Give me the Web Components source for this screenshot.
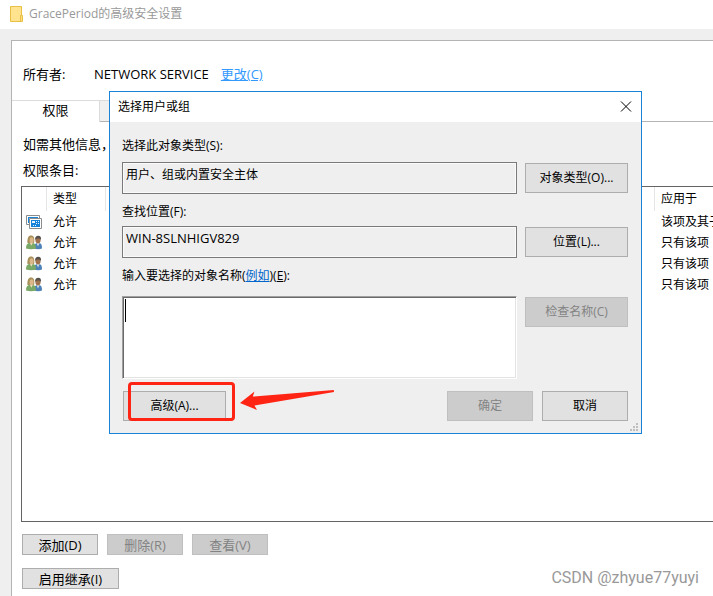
<!DOCTYPE html>
<html lang="zh-CN">
<head>
<meta charset="utf-8">
<meta name="viewport" content="width=device-width, initial-scale=1">
<title>GracePeriod的高级安全设置</title>
<style>
  html, body {
    margin: 0;
    height: 100%;
    overflow: hidden;
  }
  body {
    position: relative;
    background: #efefef;
    color: #000;
    font: 12px/16px "Open Sans", "Noto Sans CJK SC", sans-serif;
  }
  security-window {
    height: 100%;
  }
  user-picker {
    position: absolute;
    top: 91px;
    left: 109px;
  }
  water-mark {
    position: absolute;
    right: 14px;
    bottom: 8px;
  }
</style>
</head>
<body>
<security-window caption="GracePeriod的高级安全设置">
  <owner-row slot="owner" label="所有者:" owner="NETWORK SERVICE"></owner-row>
  <tab-strip slot="tabs"></tab-strip>
  <permission-table slot="list"></permission-table>
  <win-button slot="actions">添加(D)</win-button>
  <win-button slot="actions" disabled>删除(R)</win-button>
  <win-button slot="actions" disabled>查看(V)</win-button>
  <win-button slot="inherit">启用继承(I)</win-button>
</security-window>
<user-picker></user-picker>
<water-mark>CSDN @zhyue77yuyi</water-mark>

<script>
class WinButton extends HTMLElement {

  constructor() {
    super();
    this.shadowDOM = this.attachShadow({mode: 'open'});
  }

  connectedCallback() {
    this.shadowDOM.innerHTML = `
      <style>
        :host {
          display: block;
          height: var(--button-height, 30px);
        }
        button {
          display: flex;
          align-items: center;
          justify-content: center;
          box-sizing: border-box;
          width: 100%;
          height: 100%;
          padding: 0;
          border: 1px solid #adadad;
          border-radius: 0;
          background: #e1e1e1;
          color: #000;
          font: inherit;
          line-height: 16px;
          white-space: nowrap;
        }
        button:disabled {
          border-color: #bfbfbf;
          background: #ccc;
          color: #838383;
        }
      </style>
      <button type="button" ${this.hasAttribute('disabled') ? 'disabled' : ''}><slot></slot></button>
    `;
  }
}

class OwnerRow extends HTMLElement {

  constructor() {
    super();
    this.shadowDOM = this.attachShadow({mode: 'open'});
  }

  connectedCallback() {
    this.shadowDOM.innerHTML = `
      <style>
        :host {
          display: flex;
          gap: 12px;
        }
        .label {
          width: 59px;
        }
        a {
          color: #3399ff;
        }
      </style>
      <span class="label">${this.getAttribute('label')}</span>
      <span>${this.getAttribute('owner')}</span>
      <a href="#">更改(C)</a>
    `;
  }
}

class TabStrip extends HTMLElement {

  constructor() {
    super();
    this.shadowDOM = this.attachShadow({mode: 'open'});
    this.shadowDOM.innerHTML = `
      <style>
        :host {
          display: flex;
          height: 22px;
        }
        button {
          box-sizing: border-box;
          width: 88px;
          padding: 0 0 4px;
          border: 1px solid #dcdcdc;
          border-width: 1px 1px 0 0;
          background: #fff;
          font: inherit;
          line-height: 16px;
        }
        .back {
          width: 70px;
          border-bottom: 1px solid #b4b4b4;
          background: #f0f0f0;
        }
        .rest {
          flex: 1;
          border-bottom: 1px solid #b4b4b4;
        }
      </style>
      <button type="button">权限</button>
      <button type="button" class="back" aria-label="审核"></button>
      <div class="rest"></div>
    `;
  }
}

const ENTRIES = [
  {icon: 'console', type: '允许', scope: '该项及其子'},
  {icon: 'people', type: '允许', scope: '只有该项'},
  {icon: 'people', type: '允许', scope: '只有该项'},
  {icon: 'people', type: '允许', scope: '只有该项'}
];

const ICONS = {
  console: `
    <svg width="16" height="16" viewBox="0 0 16 16">
      <path d="M.5 1.500h13v9H.5z" fill="#fff" stroke="#8c8c8c"/>
      <path d="M2 3h10v6H2z" fill="#1683d8"/>
      <path d="M3 4h1v1H3zM5 4h6v1H5z" fill="#fff"/>
      <path d="M3.500 4.500h12v10h-12z" fill="#fff" stroke="#8c8c8c"/>
      <path d="M5 6h9v7H5z" fill="#1683d8"/>
      <path d="M6 7h3v2H6zM10 7h1v1h-1zM12 7h1v1h-1zM10 9h1v1h-1zM12 9h1v1h-1zM7 11h1v1H7zM9 11h1v1H9z" fill="#e8f4fd"/>
    </svg>`,
  people: `
    <svg width="16" height="16" viewBox="0 0 16 16">
      <path d="M8 13.500C8 10 9 8.500 11 8h2c2.500.3 3 2 3 5.500-2 .9-5.500.9-8 0z" fill="#4d82b8"/>
      <path d="M10.500 8l1.500 3.500L13.500 8z" fill="#d8e5ee"/>
      <ellipse cx="12" cy="5" rx="2.600" ry="3.400" fill="#a0714d"/>
      <path d="M9.200 5C8.800 2 10.300.8 12.300.8s3.200 1.500 2.600 4.200c-1-1.800-3.700-2.200-5.700 0z" fill="#55504a"/>
      <path d="M1.300 7.500C1.500 3 2.300.6 5 .6c3 0 3.500 2.400 3.300 6.600-1 1.800-5.500 2-7 .3z" fill="#a68f58"/>
      <path d="M0 13.500C0 10 1 8.300 3.500 8H7c2 .3 3 2 3 5.500-3 .9-7 .9-10 0z" fill="#7aa866"/>
      <path d="M3.800 7.500l1.500 3.200L7 7.500z" fill="#f0d9b9"/>
      <ellipse cx="5.600" cy="5.200" rx="2" ry="2.900" fill="#dcb789"/>
    </svg>`
};

class PermissionTable extends HTMLElement {

  constructor() {
    super();
    this.shadowDOM = this.attachShadow({mode: 'open'});
    this.render();
  }

  render() {
    this.shadowDOM.innerHTML = `
      <style>
        :host {
          display: block;
          height: 100%;
          box-sizing: border-box;
          border: 1px solid #646464;
          border-right: 0;
          overflow: hidden;
          font-size: 12px;
          line-height: 16px;
        }
        table {
          width: 100%;
          table-layout: fixed;
          border-collapse: separate;
          border-spacing: 0;
        }
        .icon { width: 25px; }
        .type { width: 59px; }
        .scope { width: 58px; }
        th, td {
          box-sizing: border-box;
          height: 21px;
          padding: 0 0 0 6px;
          overflow: hidden;
          text-align: left;
          font-weight: normal;
          white-space: nowrap;
        }
        th {
          height: 24px;
          border-right: 1px solid #e5e5e5;
        }
        th:last-child {
          border-right: 0;
        }
        td:first-child {
          padding-left: 4px;
        }
        svg {
          display: block;
        }
      </style>
      <table>
        <colgroup><col class="icon"><col class="type"><col><col class="scope"></colgroup>
        <thead>
          <tr><th></th><th>类型</th><th></th><th>应用于</th></tr>
        </thead>
        <tbody>
          ${ENTRIES.map(entry => `
            <tr><td>${ICONS[entry.icon]}</td><td>${entry.type}</td><td></td><td>${entry.scope}</td></tr>
          `).join('')}
        </tbody>
      </table>
    `;
  }
}

class SecurityWindow extends HTMLElement {

  constructor() {
    super();
    this.shadowDOM = this.attachShadow({mode: 'open'});
  }

  connectedCallback() {
    this.shadowDOM.innerHTML = `
      <style>
        :host {
          display: flex;
          flex-direction: column;
          font-size: 13px;
          line-height: 20px;
        }
        header {
          display: flex;
          align-items: center;
          gap: 6px;
          height: 29px;
          padding: 0 0 2px 10px;
          box-sizing: border-box;
          background: #fff;
          color: #999;
          font-size: 12px;
        }
        main {
          flex: 1;
          display: flex;
          flex-direction: column;
          min-height: 0;
          box-sizing: border-box;
          margin: 11px 0 0 11px;
          padding: 23px 0 7px;
          border: 1px solid #b4b4b4;
          border-width: 1px 0 0 1px;
          background: #fff;
        }
        .owner {
          padding: 0 11px 16px;
        }
        p {
          margin: 0;
          padding: 0 11px 6px;
        }
        .tabs {
          padding-bottom: 12px;
        }
        .entries {
          padding-bottom: 6px;
        }
        .list {
          flex: 1;
          min-height: 0;
          margin-left: 9px;
        }
        .buttons {
          display: grid;
          grid-template-columns: repeat(3, 76px);
          gap: 9px;
          padding: 12px 0 0 10px;
          --button-height: 21px;
        }
        .buttons.inherit {
          grid-template-columns: 97px;
          padding-top: 13px;
        }
      </style>
      <header>
        <svg width="13" height="16" viewBox="0 0 13 16">
          <path d="M.5.5h11v15H.5z" fill="#ffe38f" stroke="#e9bf45"/>
          <path d="M10.500 9.500h2v6h-2z" fill="#ffdf80" stroke="#e9bf45"/>
        </svg>
        <span>${this.getAttribute('caption')}</span>
      </header>
      <main>
        <div class="owner"><slot name="owner"></slot></div>
        <div class="tabs"><slot name="tabs"></slot></div>
        <p>如需其他信息，</p>
        <p class="entries">权限条目:</p>
        <div class="list"><slot name="list"></slot></div>
        <div class="buttons"><slot name="actions"></slot></div>
        <div class="buttons inherit"><slot name="inherit"></slot></div>
      </main>
    `;
  }
}

class UserPicker extends HTMLElement {

  constructor() {
    super();
    this.shadowDOM = this.attachShadow({mode: 'open'});
    this.shadowDOM.innerHTML = `
      <style>
        :host {
          display: block;
          box-sizing: border-box;
          width: 533px;
          border: 1px solid #1883d7;
          background: #efefef;
        }
        header {
          display: flex;
          align-items: center;
          justify-content: space-between;
          height: 30px;
          padding: 0 9px 0 8px;
          background: #fff;
        }
        .close {
          width: 12px;
          height: 12px;
          padding: 0;
          border: 0;
          background: none;
        }
        svg {
          display: block;
        }
        form {
          display: grid;
          grid-template-columns: 1fr 103px;
          column-gap: 8px;
          padding: 16px 13px 12px 12px;
        }
        label {
          grid-column: 1 / -1;
          padding-bottom: 8px;
        }
        .place {
          padding: 10px 0 6px;
        }
        .names {
          padding: 10px 0 12px;
        }
        a {
          color: #0066cc;
        }
        input, textarea {
          display: block;
          box-sizing: border-box;
          width: 100%;
          margin: 0;
          border-radius: 0;
          outline: 0;
          color: #000;
          font: inherit;
        }
        input {
          height: 32px;
          padding: 0 3px 8px;
          border: 1px solid #7a7a7a;
          background: #efefef;
          box-shadow: inset 0 0 0 1px #fafafa;
        }
        #place {
          font-size: 13px;
        }
        .box {
          position: relative;
        }
        textarea {
          height: 83px;
          padding: 2px;
          border: 1px solid;
          border-color: #a0a0a0 #fff #fff #a0a0a0;
          background: #fff;
          box-shadow: inset 1px 1px #696969, inset -1px -1px #e3e3e3;
          resize: none;
        }
        .caret {
          position: absolute;
          top: 3px;
          left: 3px;
          width: 1px;
          height: 23px;
          background: #000;
        }
        win-button {
          align-self: center;
        }
        .check {
          align-self: start;
          margin-top: 1px;
        }
        .actions {
          grid-column: 1 / -1;
          display: grid;
          grid-template-columns: 103px 1fr 86px 86px;
          column-gap: 9px;
          padding: 12px 0 0 1px;
        }
        .ok {
          grid-column: 3;
        }
        .grip {
          position: absolute;
          right: 3px;
          bottom: 2px;
        }
        .marks {
          position: absolute;
          left: 18px;
          bottom: 12px;
        }
      </style>
      <header>
        <span>选择用户或组</span>
        <button type="button" class="close" aria-label="关闭">
          <svg width="12" height="12" viewBox="0 0 12 12"><path d="M1 .5l10 10M11 .5l-10 10" stroke="#000"/></svg>
        </button>
      </header>
      <form>
        <label for="kind">选择此对象类型(S):</label>
        <input id="kind" type="text" value="用户、组或内置安全主体" readonly>
        <win-button>对象类型(O)...</win-button>

        <label for="place" class="place">查找位置(F):</label>
        <input id="place" type="text" value="WIN-8SLNHIGV829" readonly>
        <win-button>位置(L)...</win-button>

        <label for="names" class="names">输入要选择的对象名称(<a href="#">例如</a>)(<u>E</u>):</label>
        <div class="box">
          <textarea id="names"></textarea>
          <span class="caret"></span>
        </div>
        <win-button class="check" disabled>检查名称(C)</win-button>

        <div class="actions">
          <win-button>高级(A)...</win-button>
          <win-button class="ok" disabled>确定</win-button>
          <win-button>取消</win-button>
        </div>
      </form>
      <!-- resize grip -->
      <svg class="grip" width="8" height="8" viewBox="0 0 8 8">
        <path d="M6 0h2v2H6zM3 3h2v2H3zM6 3h2v2H6zM0 6h2v2H0zM3 6h2v2H3zM6 6h2v2H6z" fill="#bfbfbf"/>
      </svg>
      <!-- red frame and arrow over the advanced button -->
      <svg class="marks" width="207" height="40" viewBox="0 0 207 40">
        <rect x="1.500" y="2.500" width="104" height="36" rx="2.500" fill="none" stroke="#ff2414" stroke-width="3"/>
        <path d="M112 22l14.500-11.500-1.700 5 81-6.500.2 2-79.500 13.500 2.500 4.500z" fill="#ff2414"/>
      </svg>
    `;
  }
}

class WaterMark extends HTMLElement {

  constructor() {
    super();
    this.shadowDOM = this.attachShadow({mode: 'open'});
    this.shadowDOM.innerHTML = `
      <style>
        :host {
          display: block;
          color: #999;
          font: 16px/20px Roboto, "Liberation Sans", sans-serif;
          text-shadow: 1px 1px #fff;
        }
      </style>
      <slot></slot>
    `;
  }
}

customElements.define('win-button', WinButton);
customElements.define('owner-row', OwnerRow);
customElements.define('tab-strip', TabStrip);
customElements.define('permission-table', PermissionTable);
customElements.define('security-window', SecurityWindow);
customElements.define('user-picker', UserPicker);
customElements.define('water-mark', WaterMark);
</script>
</body>
</html>
